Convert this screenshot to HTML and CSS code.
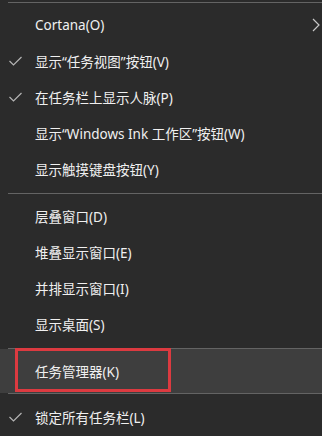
FILE: index.html
```html
<!DOCTYPE html>
<html lang="zh-CN">
<head>
    <meta charset="UTF-8">
    <title>任务栏菜单</title>
    <link rel="stylesheet" href="styles.css">
</head>
<body>
    <div class="menu">
        <div class="sep sep-top"></div>
        <div class="item">
            <span class="mark"></span>
            <span class="label">Cortana(O)</span>
            <svg class="chevron" width="8" height="14" viewBox="0 0 8 14"><polyline points="1,1 7,7 1,13" fill="none" stroke="#c8c8c8" stroke-width="1.2"/></svg>
        </div>
        <div class="item">
            <span class="mark"><svg width="13" height="10" viewBox="0 0 13 10"><polyline points="0.5,5 4.5,9 12.5,1" fill="none" stroke="#b4b4b4" stroke-width="1.2"/></svg></span>
            <span class="label">显示“任务视图”按钮(V)</span>
        </div>
        <div class="item">
            <span class="mark"><svg width="13" height="10" viewBox="0 0 13 10"><polyline points="0.5,5 4.5,9 12.5,1" fill="none" stroke="#b4b4b4" stroke-width="1.2"/></svg></span>
            <span class="label">在任务栏上显示人脉(P)</span>
        </div>
        <div class="item">
            <span class="mark"></span>
            <span class="label">显示“Windows Ink 工作区”按钮(W)</span>
        </div>
        <div class="item">
            <span class="mark"></span>
            <span class="label">显示触摸键盘按钮(Y)</span>
        </div>
        <div class="sep"></div>
        <div class="item">
            <span class="mark"></span>
            <span class="label">层叠窗口(D)</span>
        </div>
        <div class="item">
            <span class="mark"></span>
            <span class="label">堆叠显示窗口(E)</span>
        </div>
        <div class="item">
            <span class="mark"></span>
            <span class="label">并排显示窗口(I)</span>
        </div>
        <div class="item">
            <span class="mark"></span>
            <span class="label">显示桌面(S)</span>
        </div>
        <div class="sep sep-hl"></div>
        <div class="item item-hover">
            <span class="mark"></span>
            <span class="label">任务管理器(K)</span>
            <span class="callout"></span>
        </div>
        <div class="sep sep-after"></div>
        <div class="item">
            <span class="mark"><svg width="13" height="10" viewBox="0 0 13 10"><polyline points="0.5,5 4.5,9 12.5,1" fill="none" stroke="#b4b4b4" stroke-width="1.2"/></svg></span>
            <span class="label">锁定所有任务栏(L)</span>
        </div>
    </div>
</body>
</html>
```

FILE: styles.css
```css
html, body {
    margin: 0;
    height: 100%;
    overflow: hidden;
}
body {
    background-color: #2b2b2b;
    font-family: "Noto Sans", "Noto Sans CJK SC", sans-serif;
    font-size: 13.5px;
    color: #f0f0f0;
}
.menu {
    padding-top: 2px;
}
.sep {
    height: 1px;
    margin: 6px 0 4px 8px;
    background-color: #646464;
}
.sep-top {
    margin: 0 0 4px 8px;
}
.sep-hl {
    margin-bottom: 0;
}
.sep-after {
    margin-top: 0;
    margin-bottom: 5px;
}
.item {
    position: relative;
    display: flex;
    align-items: center;
    height: 36px;
}
.item-hover {
    height: 44px;
    background-color: #3e3e3e;
}
.mark {
    width: 35px;
    display: flex;
    justify-content: flex-start;
    padding-left: 9px;
    box-sizing: border-box;
}
.label {
    flex: 1;
    white-space: nowrap;
}
.chevron {
    margin-right: 2px;
}
.callout {
    position: absolute;
    left: 15px;
    top: -1px;
    width: 150px;
    height: 38px;
    border: 3px solid #dc3a40;
}
```
